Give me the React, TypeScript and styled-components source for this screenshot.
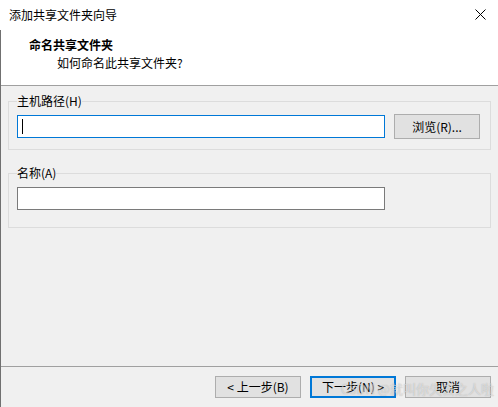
import React from "react";
import styled, { createGlobalStyle } from "styled-components";

const GlobalStyle = createGlobalStyle`
  html, body {
    margin: 0;
    padding: 0;
    background: #ffffff;
  }
  body {
    font-family: "Noto Sans CJK SC", "Noto Sans", sans-serif;
    font-size: 12px;
    color: #000000;
  }
`;

const Window = styled.div`
  width: 498px;
  height: 407px;
  display: flex;
  flex-direction: column;
  background: #ffffff;
  overflow: hidden;
  position: relative;
`;

const TitleBar = styled.div`
  height: 30px;
  display: flex;
  align-items: center;
  justify-content: space-between;
  padding: 0 12px 0 9px;
  box-sizing: border-box;
  flex-shrink: 0;
`;

const TitleText = styled.span`
  font-size: 12px;
  line-height: 16px;
  margin-top: -1px;
`;

const CloseButton = styled.div`
  width: 12px;
  height: 12px;
  display: flex;
  align-items: center;
  justify-content: center;
  margin-top: -2px;
`;

const Frame = styled.div`
  flex: 1;
  display: flex;
  flex-direction: column;
  border-left: 1px solid #707070;
  min-height: 0;
`;

const Header = styled.div`
  height: 56px;
  box-sizing: border-box;
  padding: 7px 0 0 28px;
  background: #ffffff;
  border-bottom: 1px solid #a0a0a0;
  display: flex;
  flex-direction: column;
  gap: 2px;
  flex-shrink: 0;
`;

const HeaderTitle = styled.div`
  font-weight: 700;
  font-size: 12px;
  line-height: 16px;
`;

const HeaderSub = styled.div`
  font-size: 12px;
  line-height: 16px;
  padding-left: 28px;
`;

const Body = styled.div`
  flex: 1;
  background: #f0f0f0;
  padding: 7px 7px 0 7px;
  display: flex;
  flex-direction: column;
  gap: 15px;
`;

const Group = styled.fieldset<{ $bottom: number }>`
  margin: 0;
  border: 1px solid #dcdcdc;
  padding: 5px 8px ${({ $bottom }) => $bottom}px 8px;
  min-width: 0;
`;

const GroupLabel = styled.legend`
  padding: 0;
  font-size: 12px;
  line-height: 16px;
  color: #000000;
`;

const Row = styled.div`
  display: flex;
  align-items: center;
  height: 25px;
  gap: 9px;
`;

const TextBox = styled.div<{ $focused?: boolean }>`
  width: 368px;
  height: 23px;
  box-sizing: border-box;
  background: #ffffff;
  border: 1px solid ${({ $focused }) => ($focused ? "#0078d7" : "#7a7a7a")};
  display: flex;
  align-items: center;
  padding-left: 4px;
`;

const Caret = styled.span`
  width: 1px;
  height: 15px;
  background: #000000;
`;

const Button = styled.div<{ $default?: boolean }>`
  width: 86px;
  height: 22px;
  box-sizing: border-box;
  background: #e1e1e1;
  border: ${({ $default }) => ($default ? "2px solid #0078d7" : "1px solid #adadad")};
  display: flex;
  align-items: center;
  justify-content: center;
  font-size: 12px;
  line-height: 16px;
  flex-shrink: 0;
`;

const BrowseButton = styled(Button)`
  height: 25px;
`;

const Footer = styled.div`
  height: 41px;
  box-sizing: border-box;
  background: #f0f0f0;
  border-top: 1px solid #a0a0a0;
  display: flex;
  justify-content: flex-end;
  align-items: flex-start;
  padding: 9px 7px 0 0;
  gap: 9px;
  flex-shrink: 0;
`;

const Watermark = styled.div`
  position: absolute;
  right: 4px;
  bottom: 10px;
  font-size: 13px;
  line-height: 16px;
  color: rgba(255, 255, 255, 0.5);
  text-shadow: 0 0 1px rgba(90, 90, 90, 0.45);
  pointer-events: none;
  white-space: nowrap;
`;

const App = () => {
  return (
    <Window>
      <GlobalStyle />
      <TitleBar>
        <TitleText>添加共享文件夹向导</TitleText>
        <CloseButton>
          <svg width="11" height="11" viewBox="0 0 11 11">
            <path d="M0.5 0.5 L10.5 10.5 M10.5 0.5 L0.5 10.5" stroke="#000" strokeWidth="1" fill="none" />
          </svg>
        </CloseButton>
      </TitleBar>
      <Frame>
        <Header>
          <HeaderTitle>命名共享文件夹</HeaderTitle>
          <HeaderSub>如何命名此共享文件夹?</HeaderSub>
        </Header>
        <Body>
          <Group $bottom={10}>
            <GroupLabel>主机路径(H)</GroupLabel>
            <Row>
              <TextBox $focused>
                <Caret />
              </TextBox>
              <BrowseButton>浏览(R)...</BrowseButton>
            </Row>
          </Group>
          <Group $bottom={16}>
            <GroupLabel>名称(A)</GroupLabel>
            <Row>
              <TextBox />
            </Row>
          </Group>
        </Body>
        <Footer>
          <Button>&lt; 上一步(B)</Button>
          <Button $default>下一步(N) &gt;</Button>
          <Button>取消</Button>
        </Footer>
      </Frame>
      <Watermark>CSDN @就叫你失去之人啦</Watermark>
    </Window>
  );
};

export default App;
